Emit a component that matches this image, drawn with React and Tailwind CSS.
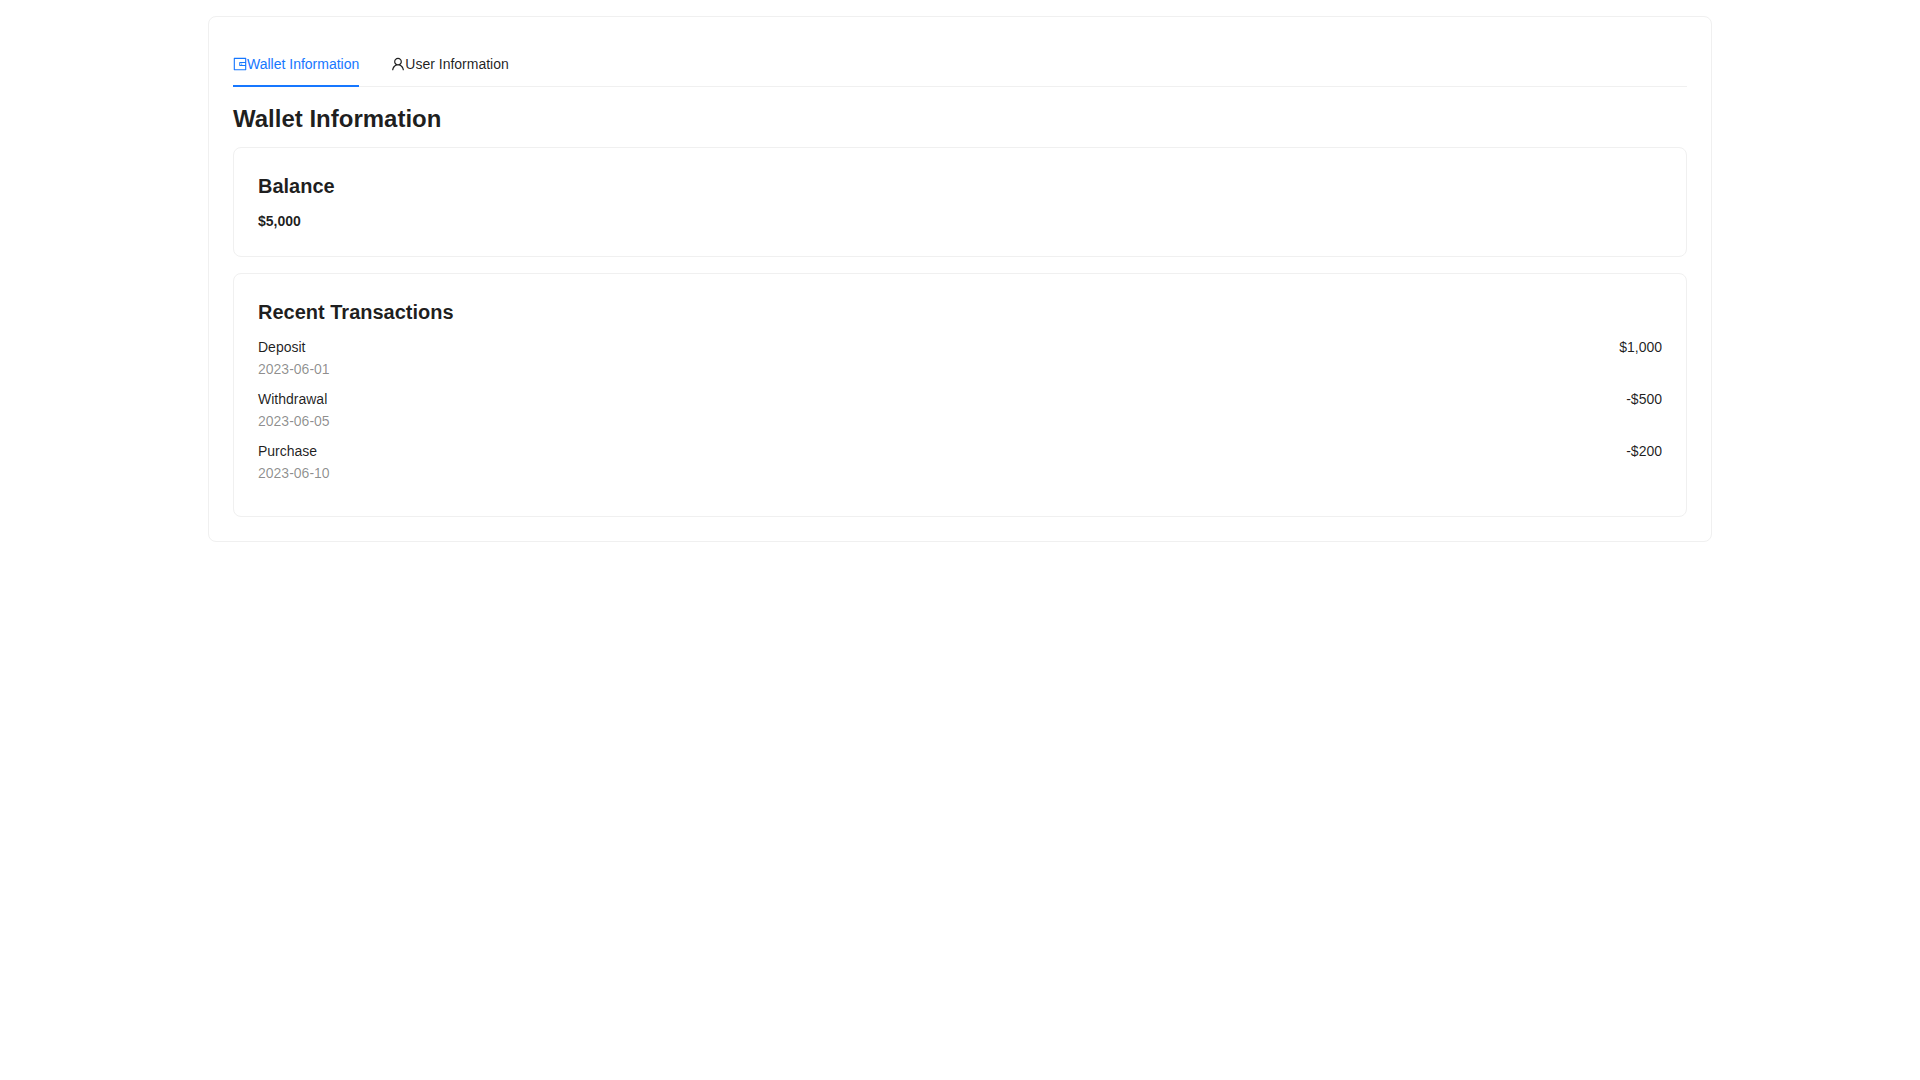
import { useState } from 'react';
import { AiOutlineUser, AiOutlineWallet } from 'react-icons/ai';

const tabs = [
  { key: 'wallet', label: 'Wallet Information', icon: AiOutlineWallet },
  { key: 'user', label: 'User Information', icon: AiOutlineUser },
];

const transactions = [
  { id: 1, type: 'Deposit', date: '2023-06-01', amount: '$1,000' },
  { id: 2, type: 'Withdrawal', date: '2023-06-05', amount: '-$500' },
  { id: 3, type: 'Purchase', date: '2023-06-10', amount: '-$200' },
];

const Card = ({ className = '', children }) => (
  <div className={`rounded-lg border border-[#f0f0f0] bg-white p-6 ${className}`}>{children}</div>
);

const CardTitle = ({ children }) => (
  <h3 className="mb-2.5 text-xl leading-7 font-semibold">{children}</h3>
);

function WalletInformation() {
  return (
    <>
      <h2 className="mb-3 text-2xl font-semibold">Wallet Information</h2>
      <Card className="mb-4">
        <CardTitle>Balance</CardTitle>
        <p className="font-semibold">$5,000</p>
      </Card>
      <Card>
        <CardTitle>Recent Transactions</CardTitle>
        <ul>
          {transactions.map((item) => (
            <li key={item.id} className="mb-2 flex justify-between">
              <div>
                <p>{item.type}</p>
                <p className="text-black/45">{item.date}</p>
              </div>
              <span>{item.amount}</span>
            </li>
          ))}
        </ul>
      </Card>
    </>
  );
}

export default function App() {
  const [active, setActive] = useState('wallet');

  return (
    <main className="p-4 font-['Liberation_Sans',Arial,sans-serif] text-sm leading-[22px] text-black/88">
      <Card className="mx-auto max-w-[1504px]">
        <div role="tablist" className="mb-4 flex gap-8 border-b border-[#f0f0f0]">
          {tabs.map(({ key, label, icon: Icon }) => (
            <button
              key={key}
              id={`tab-${key}`}
              type="button"
              role="tab"
              aria-selected={active === key}
              onClick={() => setActive(key)}
              className={`-mb-px flex cursor-pointer items-center border-b-2 pt-3 pb-2.5 ${
                active === key ? 'border-[#1677ff] text-[#1677ff]' : 'border-transparent'
              }`}
            >
              {/* trims the empty margin around the glyph */}
              <Icon viewBox="64 64 896 896" className="size-3.5" />
              {label}
            </button>
          ))}
        </div>
        <div role="tabpanel" aria-labelledby={`tab-${active}`}>
          {active === 'wallet' && <WalletInformation />}
        </div>
      </Card>
    </main>
  );
}
